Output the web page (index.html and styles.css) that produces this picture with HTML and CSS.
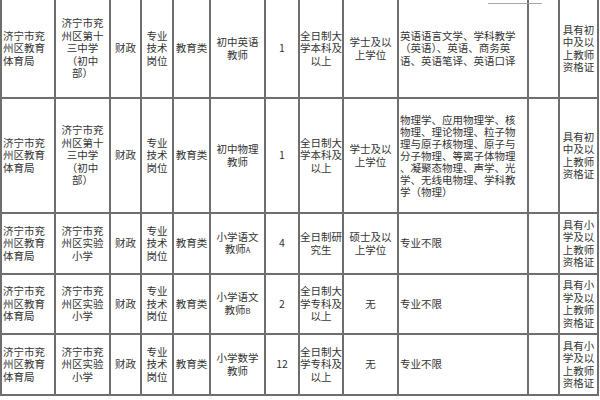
FILE: index.html
```html
<!DOCTYPE html>
<html lang="zh">
<head>
<meta charset="utf-8">
<title>招聘岗位表</title>
<link rel="stylesheet" href="styles.css">
</head>
<body>
<div class="sheet">
  <div class="grid">
    <div class="c l"><p>济宁市兖<br>州区教育<br>体育局</p></div>
    <div class="c"><p>济宁市兖<br>州区第十<br>三中学<br>（初中<br>部）</p></div>
    <div class="c"><p>财政</p></div>
    <div class="c"><p>专业<br>技术<br>岗位</p></div>
    <div class="c"><p>教育类</p></div>
    <div class="c"><p>初中英语<br>教师</p></div>
    <div class="c"><p>1</p></div>
    <div class="c"><p>全日制大<br>学本科及<br>以上</p></div>
    <div class="c"><p>学士及以<br>上学位</p></div>
    <div class="c l"><p>英语语言文学、学科教学<br>（英语）、英语、商务英<br>语、英语笔译、英语口译</p></div>
    <div class="c"></div>
    <div class="c"><p>具有初<br>中及以<br>上教师<br>资格证</p></div>

    <div class="c l"><p>济宁市兖<br>州区教育<br>体育局</p></div>
    <div class="c"><p>济宁市兖<br>州区第十<br>三中学<br>（初中<br>部）</p></div>
    <div class="c"><p>财政</p></div>
    <div class="c"><p>专业<br>技术<br>岗位</p></div>
    <div class="c"><p>教育类</p></div>
    <div class="c"><p>初中物理<br>教师</p></div>
    <div class="c"><p>1</p></div>
    <div class="c"><p>全日制大<br>学本科及<br>以上</p></div>
    <div class="c"><p>学士及以<br>上学位</p></div>
    <div class="c l tight"><p>物理学、应用物理学、核<br>物理、理论物理、粒子物<br>理与原子核物理、原子与<br>分子物理、等离子体物理<br>、凝聚态物理、声学、光<br>学、无线电物理、学科教<br>学（物理）</p></div>
    <div class="c"></div>
    <div class="c"><p>具有初<br>中及以<br>上教师<br>资格证</p></div>

    <div class="c l"><p>济宁市兖<br>州区教育<br>体育局</p></div>
    <div class="c"><p>济宁市兖<br>州区实验<br>小学</p></div>
    <div class="c"><p>财政</p></div>
    <div class="c"><p>专业<br>技术<br>岗位</p></div>
    <div class="c"><p>教育类</p></div>
    <div class="c"><p>小学语文<br>教师<span class="sm">A</span></p></div>
    <div class="c"><p>4</p></div>
    <div class="c"><p>全日制研<br>究生</p></div>
    <div class="c"><p>硕士及以<br>上学位</p></div>
    <div class="c l"><p>专业不限</p></div>
    <div class="c"></div>
    <div class="c"><p>具有小<br>学及以<br>上教师<br>资格证</p></div>

    <div class="c l"><p>济宁市兖<br>州区教育<br>体育局</p></div>
    <div class="c"><p>济宁市兖<br>州区实验<br>小学</p></div>
    <div class="c"><p>财政</p></div>
    <div class="c"><p>专业<br>技术<br>岗位</p></div>
    <div class="c"><p>教育类</p></div>
    <div class="c"><p>小学语文<br>教师<span class="sm">B</span></p></div>
    <div class="c"><p>2</p></div>
    <div class="c"><p>全日制大<br>学专科及<br>以上</p></div>
    <div class="c"><p>无</p></div>
    <div class="c l"><p>专业不限</p></div>
    <div class="c"></div>
    <div class="c"><p>具有小<br>学及以<br>上教师<br>资格证</p></div>

    <div class="c l"><p>济宁市兖<br>州区教育<br>体育局</p></div>
    <div class="c"><p>济宁市兖<br>州区实验<br>小学</p></div>
    <div class="c"><p>财政</p></div>
    <div class="c"><p>专业<br>技术<br>岗位</p></div>
    <div class="c"><p>教育类</p></div>
    <div class="c"><p>小学数学<br>教师</p></div>
    <div class="c"><p>12</p></div>
    <div class="c"><p>全日制大<br>学专科及<br>以上</p></div>
    <div class="c"><p>无</p></div>
    <div class="c l"><p>专业不限</p></div>
    <div class="c"></div>
    <div class="c"><p>具有小<br>学及以<br>上教师<br>资格证</p></div>
  </div>
  <div class="scrap"></div>
</div>
</body>
</html>
```

FILE: styles.css
```css
html, body {
  margin: 0;
  padding: 0;
  background: #ffffff;
}

body {
  width: 600px;
  height: 400px;
  overflow: hidden;
  font-family: "Noto Sans CJK SC", "Noto Sans", sans-serif;
  font-size: 10.5px;
  line-height: 12.5px;
  color: #333333;
}

.sheet {
  position: relative;
  width: 600px;
}

.grid {
  display: grid;
  grid-template-columns: 52px 53px 29px 30px 35px 53px 32px 42px 53px 128px 29px 37px;
  grid-template-rows: 97px 113px 59px 58px 59px;
  gap: 2px;
  padding: 0 2px 2px 2px;
  width: max-content;
  background: #6e6e6e;
}

.c {
  background: #ffffff;
  display: flex;
  align-items: center;
  justify-content: center;
  text-align: center;
  white-space: nowrap;
  overflow: hidden;
}

.c p {
  margin: 0;
}

.c.l {
  justify-content: flex-start;
  text-align: left;
  padding-left: 1px;
}

.c.tight {
  line-height: 12px;
}

.sm {
  font-size: 7.5px;
}

.scrap {
  position: absolute;
  left: 488px;
  top: 3px;
  width: 54px;
  height: 1px;
  background: #a8a8a8;
}
```
